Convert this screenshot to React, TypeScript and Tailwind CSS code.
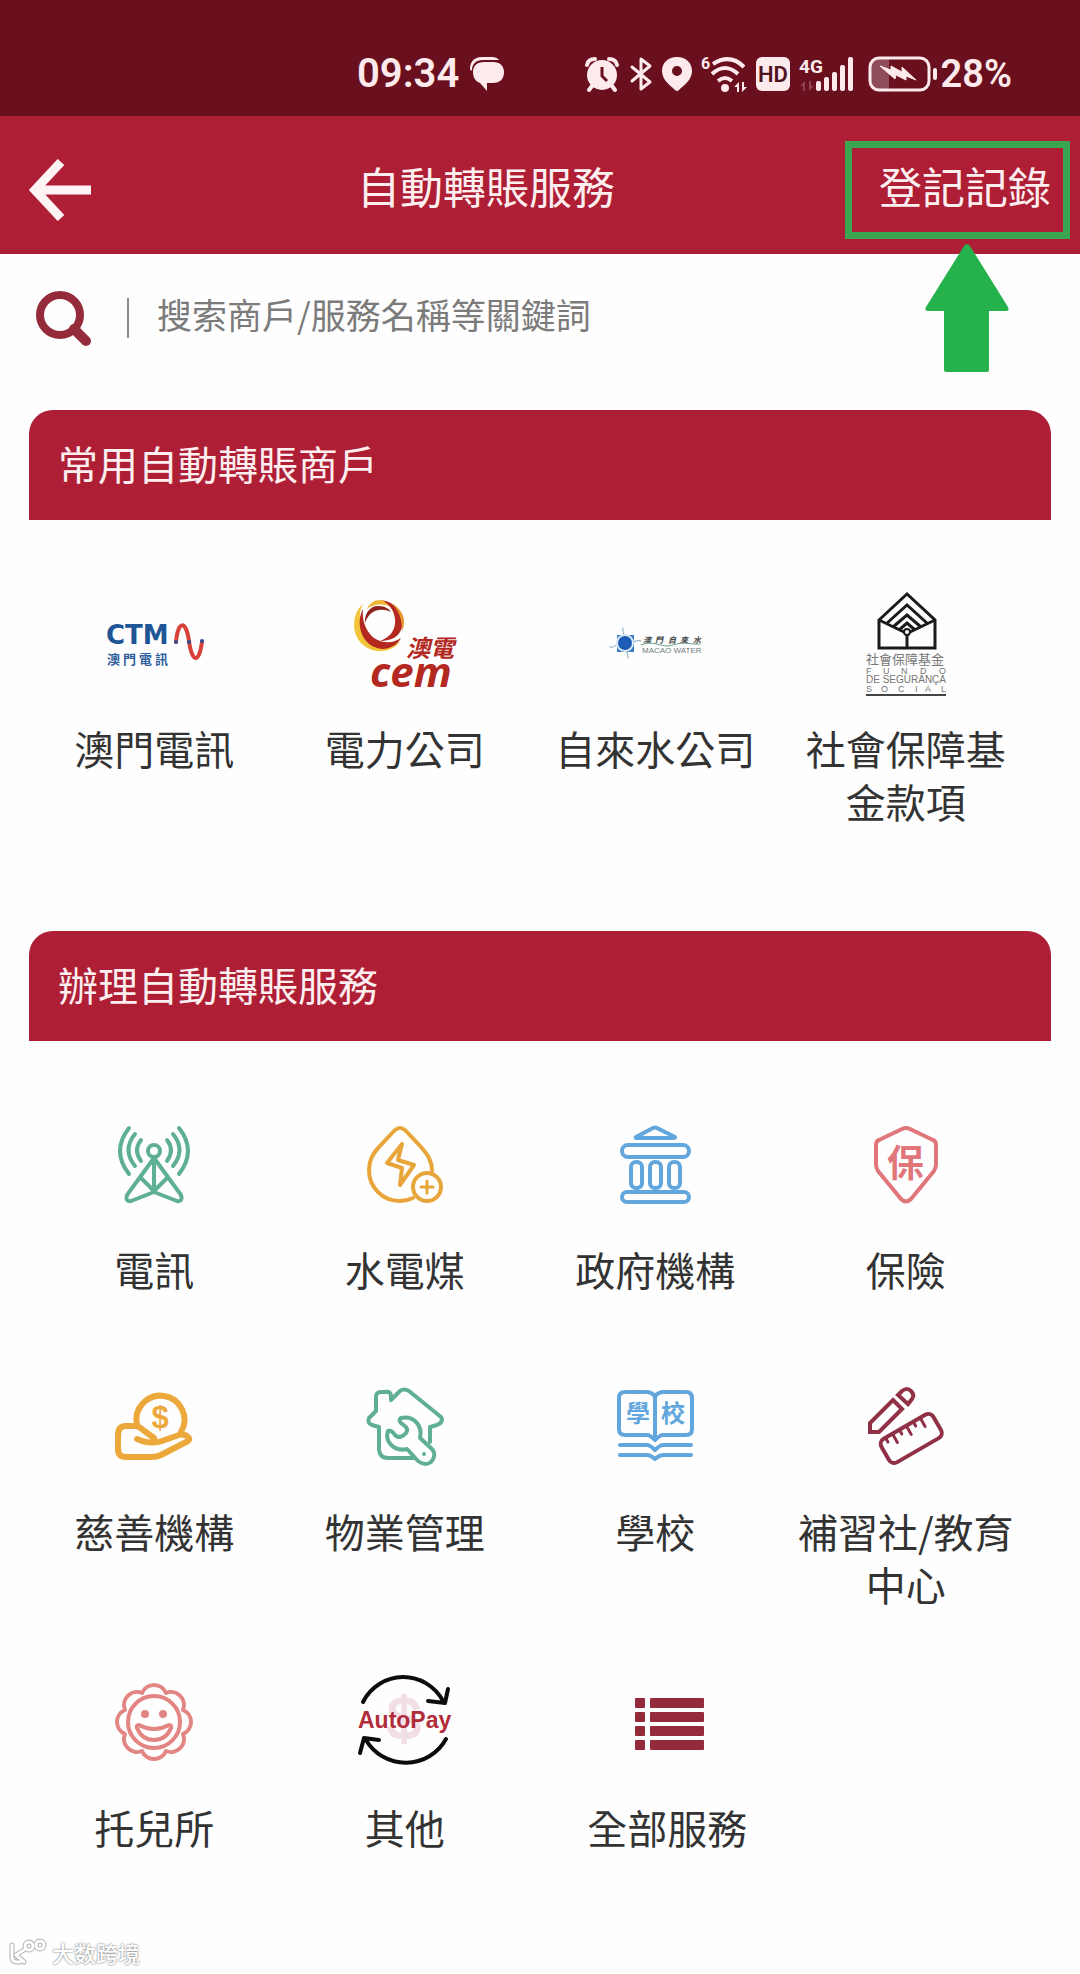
import type { ReactNode } from "react";

const GREEN = "#5fb092";
const ORANGE = "#e8a53a";
const BLUE = "#62a6de";
const CORAL = "#e0767a";
const WINE = "#932b3a";
const CJK = '"Noto Sans CJK TC", sans-serif';

function Art({ children, color = "none", width = 4 }: { children: ReactNode; color?: string; width?: number }) {
  return (
    <svg
      viewBox="0 0 96 96"
      className="h-24 w-24 shrink-0 overflow-visible"
      fill="none"
      stroke={color}
      strokeWidth={width}
      strokeLinecap="round"
      strokeLinejoin="round"
      aria-hidden="true"
    >
      {children}
    </svg>
  );
}

const ctm = (
  <Art>
    <text x="0" y="49" fontSize="26" fontWeight="700" fontFamily='"DejaVu Sans", sans-serif' fill="#1d5596">CTM</text>
    <text x="1 17 33 49" y="69" fontSize="13" fontWeight="700" fontFamily={CJK} fill="#2d609c">澳門電訊</text>
    <path d="M70 47 C72 25 80 25 83 46 C86 68 93 69 96 47" stroke="#d8413a" strokeWidth="4" />
    <g fill="#2a4f8f">
      <circle cx="70" cy="47" r="2" />
      <circle cx="83" cy="47" r="2" />
      <circle cx="96" cy="46" r="2" />
    </g>
  </Art>
);

const cem = (
  <Art>
    <path d="M6 9 C-8 20 -7 52 20 56 C30 57 38 53 43 47 C30 54 10 50 5 33 C2 24 2 16 6 9Z" fill="#f3c53a" />
    <path d="M10 14 C15 3 28 2 34 12 C26 8 16 9 10 14Z" fill="#f0b83a" />
    <path d="M6 14 C-1 26 3 48 20 53 C30 56 40 51 44 43 C34 50 20 48 13 39 C7 32 5 22 6 14Z" fill="#b3291f" />
    <path d="M25 5 C40 8 48 20 45 32 C43 41 35 46 23 46 C34 42 39 34 38 24 C37 15 32 9 25 5Z" fill="#b3291f" />
    <path d="M34 8 C46 14 50 26 45 36 C45 24 42 15 34 8Z" fill="#e9962f" />
    <path d="M8 28 C7 18 14 10 22 11 C28 11 32 14 34 17 C24 12 12 15 8 28Z" fill="#8e2320" />
    <text x="49" y="62" fontSize="24" fontWeight="700" fontStyle="italic" fontFamily={CJK} fill="#b3291f">澳電</text>
    <text x="13" y="92" fontSize="42" fontWeight="700" fontStyle="italic" fontFamily='"Open Sans", sans-serif' fill="#b3291f">cem</text>
  </Art>
);

const water = (
  <Art>
    <path d="M16 33 C15 37 17 39 18 42 M3 52 C7 53 9 50 12 48 M21 63 C21 59 20 57 18 54 M34 46 C30 45 28 46 25 48" stroke="#7da3bb" strokeWidth="1" />
    <rect x="10" y="40" width="17" height="17" fill="#3d7fc8" />
    <circle cx="18" cy="48" r="9" fill="#dcebf7" />
    <circle cx="18" cy="48" r="7" fill="#1d5cb4" />
    <text x="36 48 61 73 86" y="48" fontSize="8" fontWeight="700" fontStyle="italic" fontFamily={CJK} fill="#444">澳門自來水</text>
    <path d="M34 50 C48 44 54 54 66 50 S84 50 93 49" stroke="#6aa28f" strokeWidth="1" />
    <text x="35" y="58" fontSize="8" fontFamily='"Liberation Sans", sans-serif' fill="#6f7f7d">MACAO WATER</text>
  </Art>
);

const fss = (
  <Art>
    <g stroke="#1b1b1b" strokeWidth="3" strokeLinecap="butt" strokeLinejoin="miter">
      <path d="M21 25 L49 -1 L77 25 V53 H21Z" />
      <path d="M21 25 L46 37 M77 25 L52 37 M49 40 V53" />
      <path d="M28 29 L49 10 L70 29 M35 32 L49 20 L63 32 M41 35 L49 28 L57 35" />
      <circle cx="49" cy="37" r="3" strokeWidth="2" />
    </g>
    <g fill="#777" fontFamily='"Liberation Sans", sans-serif'>
      <text x="8" y="69" fontSize="13" fontFamily={CJK}>社會保障基金</text>
      <text x="8 25 43 62 81" y="79" fontSize="9">FUNDO</text>
      <text x="8" y="88" fontSize="10">DE SEGURANÇA</text>
      <text x="8 23 40 57 67 83" y="97" fontSize="9">SOCIAL</text>
    </g>
    <path d="M8 100 H88" stroke="#444" strokeWidth="2" strokeLinecap="butt" />
  </Art>
);

const tower = (
  <Art color={GREEN}>
    <circle cx="48" cy="35" r="6" />
    <path d="M48 42 L21 79 Q19 86 25 85 L48 76 L71 85 Q77 86 75 79 Z M48 42 V76 M35 62 L48 75 L61 62" />
    <path d="M23 12 Q5 35 23 58 M29 18 Q16 34 29 50 M35 24 Q27 34 35 45" />
    <path d="M73 12 Q91 35 73 58 M67 18 Q80 34 67 50 M61 24 Q69 34 61 45" />
  </Art>
);

const drop = (
  <Art color={ORANGE}>
    <path d="M56 82 C52 84 48 85 43 85 C25 85 12 71 12 54 C12 44 16 37 22 31 L37 15 Q43 9 49 15 L64 31 C71 39 75 45 75 55" />
    <circle cx="70" cy="71" r="14" />
    <path d="M64 71 H76 M70 65 V77" strokeWidth="3" />
    <path d="M45 28 L30 47 L45 52 L43 69 L57 49 L41 44Z" />
  </Art>
);

const government = (
  <Art color={BLUE}>
    <path d="M46 12 Q48 11 50 12 L68 21 Q68 22 66 22 H30 Q28 22 29 21Z" />
    <rect x="15" y="29" width="67" height="12" rx="6" />
    <rect x="24" y="46" width="11" height="26" rx="5" />
    <rect x="43" y="46" width="11" height="26" rx="5" />
    <rect x="62" y="46" width="11" height="26" rx="5" />
    <rect x="15" y="76" width="67" height="10" rx="5" />
  </Art>
);

const insurance = (
  <Art color={CORAL}>
    <path d="M44 13 Q48 11 52 13 L75 24 Q78 25 78 29 V48 Q78 52 76 55 L53 83 Q48 88 43 83 L20 55 Q18 52 18 48 V29 Q18 25 21 24Z" />
    <text x="29" y="61" fontSize="37" fontWeight="700" fontFamily={CJK} fill={CORAL} stroke="none">保</text>
  </Art>
);

const charity = (
  <Art color="#eca83a" width={6}>
    <path d="M31 47 A24 24 0 1 1 75 54" />
    <path d="M31 61 Q45 67 56 63 L73 57 Q79 55 83 60 Q84 61 82 63 L55 77 Q51 79 45 79 H20 Q12 79 12 71 V57 Q12 48 20 48 H29 Q33 48 37 52 L48 60" />
    <text x="54" y="50" textAnchor="middle" fontSize="31" fontWeight="700" fontFamily='"Liberation Sans", sans-serif' fill="#eca83a" stroke="none">$</text>
  </Art>
);

const property = (
  <Art color={GREEN}>
    <path d="M73 64 V49 L80 47 Q87 44 84 39 L52 13 Q47 10 43 13 L34 22 V17 Q33 13 28 14 H24 Q19 14 19 19 V33 L12 40 Q10 45 15 47 L22 49 V72 Q23 80 31 80 H57" />
    <path d="M44 40 C56 37 66 47 63 60 L75 71 C79 76 77 81 74 84 C70 87 65 86 61 83 L50 71 C38 74 27 64 31 53 C34 52 36 54 38 57 Q42 61 47 57 Q52 53 49 49 L44 45 Q41 42 44 40Z" />
    <circle cx="67" cy="76" r="2" fill={GREEN} stroke="none" />
  </Art>
);

const school = (
  <Art color={BLUE}>
    <path d="M48 18 Q44 14 40 14 H18 Q12 14 12 20 V51 Q12 57 18 57 H40 Q43 57 48 62 Q53 57 56 57 H79 Q85 57 85 51 V20 Q85 14 79 14 H56 Q52 14 48 18 V61" />
    <path d="M13 67 H40 Q43 67 48 72 Q53 67 56 67 H84 M13 77 H40 Q43 77 48 81 Q53 77 56 77 H84" />
    <g fill={BLUE} stroke="none" fontSize="24" fontWeight="700" fontFamily={CJK}>
      <text x="19" y="44">學</text>
      <text x="54" y="44">校</text>
    </g>
  </Art>
);

const education = (
  <Art color="#903146">
    <g strokeLinejoin="miter">
      <path d="M40 17 L44 13 Q49 9 53 13 Q57 17 54 21 L50 26 Z" />
      <path d="M35 22 L44 31 L21 54 H12 V45Z" />
    </g>
    <g transform="rotate(-30 53 60)">
      <rect x="23" y="47" width="60" height="27" rx="6" />
      <path d="M31 48 V52 M39 48 V57 M47 48 V52 M55 48 V57 M63 48 V52 M71 48 V57" strokeWidth="3" />
    </g>
  </Art>
);

const nursery = (
  <Art color="#e38583">
    <path d="M77 60 A13 13 0 0 1 60 77 A13 13 0 0 1 36 77 A13 13 0 0 1 19 60 A13 13 0 0 1 19 36 A13 13 0 0 1 36 19 A13 13 0 0 1 60 19 A13 13 0 0 1 77 36 A13 13 0 0 1 77 60Z" />
    <circle cx="48" cy="48" r="26" />
    <path d="M33 51 Q48 59 63 51 Q66 51 65 54 Q60 66 48 66 Q36 66 31 54 Q30 51 33 51Z" />
    <g fill="#e38583" stroke="none">
      <circle cx="39" cy="40" r="4" />
      <circle cx="57" cy="40" r="4" />
    </g>
  </Art>
);

const autopay = (
  <Art>
    <text x="47" y="65" textAnchor="middle" fontSize="60" fontFamily='"Liberation Sans", sans-serif' fill="#f2dfe4" stroke="#f2dfe4" strokeWidth="2">$</text>
    <g stroke="#0c0c0c" strokeWidth="4">
      <path d="M6 28 A45 45 0 0 1 86 27 M71 27 L88 29 L91 15" />
      <path d="M89 65 A46 46 0 0 1 9 66 M22 66 L7 64 L3 79" />
    </g>
    <text x="1" y="54" fontSize="23" fontWeight="700" fontFamily='"Liberation Sans", sans-serif' fill="#b12c3b">AutoPay</text>
  </Art>
);

const allServices = (
  <Art>
    <g fill={WINE}>
      {[24, 38, 52, 66].map((y) => (
        <g key={y}>
          <rect x="16" y={y} width="10" height="10" rx="1" />
          <rect x="31" y={y} width="54" height="10" rx="1" />
        </g>
      ))}
    </g>
  </Art>
);

type Item = { label: string; icon: ReactNode; wide?: boolean };

const merchants: Item[] = [
  { label: "澳門電訊", icon: ctm },
  { label: "電力公司", icon: cem },
  { label: "自來水公司", icon: water },
  { label: "社會保障基金款項", icon: fss },
];

const services: Item[] = [
  { label: "電訊", icon: tower },
  { label: "水電煤", icon: drop },
  { label: "政府機構", icon: government },
  { label: "保險", icon: insurance },
  { label: "慈善機構", icon: charity },
  { label: "物業管理", icon: property },
  { label: "學校", icon: school },
  { label: "補習社/教育中心", icon: education },
  { label: "托兒所", icon: nursery },
  { label: "其他", icon: autopay },
  { label: "全部服務", icon: allServices, wide: true },
];

function Section({ title, items }: { title: string; items: Item[] }) {
  return (
    <section className="px-[29px]">
      <h2 className="flex h-[110px] items-center rounded-t-3xl bg-[#ae1e35] px-[29px] pb-1 text-[40px] text-[#fdeef0]">{title}</h2>
      <div className="mr-5 grid grid-cols-4 gap-y-[63px] pt-[75px]">
        {items.map((item) => (
          <button
            key={item.label}
            type="button"
            className={item.wide ? "flex flex-col items-center gap-[31px] pl-6" : "flex flex-col items-center gap-[31px]"}
          >
            {item.icon}
            <span className="min-h-[72px] w-full px-4 text-[40px] leading-[53px] text-[#333]">{item.label}</span>
          </button>
        ))}
      </div>
    </section>
  );
}

function StatusBar() {
  const fg = "#fdeaec";
  return (
    <div className="flex h-[116px] items-center justify-between bg-[#6a0f1d] pr-[68px] pl-[357px] font-['Roboto',sans-serif] font-semibold text-[#fdeaec]">
      <div className="flex items-center gap-[10px] pt-8">
        <span className="text-[40px] leading-[44px]">09:34</span>
        <svg viewBox="0 0 36 36" className="size-9" fill={fg} aria-hidden="true">
          <path d="M1 13 C1 5 6 1 13 1 H23 Q28 1 30 4 H14 C7 4 3 8 3 14 Q2 16 1 13Z" />
          <path d="M15 6 H24 C31 6 35 10 35 16 C35 23 31 27 24 27 H18 V35 L11 27 C6 25 4 21 4 16 C4 10 8 6 15 6Z" />
        </svg>
      </div>
      <div className="flex items-center gap-[9px] pt-8">
        <svg viewBox="0 0 36 36" className="size-9" fill={fg} aria-hidden="true">
          <circle cx="18" cy="19" r="15" />
          <path d="M3 9 Q4 3 11 3 M25 3 Q32 3 33 9 M8 30 L5 34 M28 30 L31 34" stroke={fg} strokeWidth="4" strokeLinecap="round" fill="none" />
          <path d="M18 11 V20 L23 25" stroke="#6a0f1d" strokeWidth="3" fill="none" />
        </svg>
        <svg viewBox="0 0 24 36" className="h-9 w-6" fill="none" stroke={fg} strokeWidth="3" strokeLinejoin="round" strokeLinecap="round" aria-hidden="true">
          <path d="M3 11 L21 26 L12 33 V3 L21 10 L3 25" />
        </svg>
        <svg viewBox="0 0 30 36" className="h-9 w-[30px]" fill={fg} fillRule="evenodd" aria-hidden="true">
          <path d="M15 1 C24 1 30 7 30 15 C30 24 22 29 17 34 Q15 36 13 34 C8 29 0 24 0 15 C0 7 6 1 15 1Z M15 10 A5 5 0 1 0 15 20 A5 5 0 1 0 15 10Z" />
        </svg>
        <svg viewBox="0 0 46 38" className="h-[38px] w-[46px]" fill="none" stroke={fg} strokeWidth="4" aria-hidden="true">
          <text x="0" y="14" fontSize="16" fontWeight="700" fill={fg} stroke="none">6</text>
          <path d="M12 9 Q29 -2 43 12 M11 19 Q24 7 37 19 M17 26 Q24 20 31 26" />
          <circle cx="24" cy="33" r="4" fill={fg} stroke="none" />
          <path d="M33 32 L38 27 V37 H36 V32Z M46 32 L41 37 V27 H43 V32Z" fill={fg} stroke="none" />
        </svg>
        <svg viewBox="0 0 34 36" className="h-9 w-[34px]" aria-hidden="true">
          <rect y="1" width="34" height="34" rx="6" fill={fg} />
          <text x="17" y="26" textAnchor="middle" fontSize="22" fontWeight="600" fill="#4f1420">HD</text>
        </svg>
        <svg viewBox="0 0 56 36" className="h-9 w-14" fill={fg} aria-hidden="true">
          <text x="0" y="17" fontSize="19" fontWeight="700">4G</text>
          <path d="M1 30 L6 25 V35 H4 V30Z M15 30 L10 35 V25 H12 V30Z" fill="#8f4351" />
          <rect x="17" y="25" width="5" height="10" rx="2" />
          <rect x="25" y="21" width="5" height="14" rx="2" />
          <rect x="33" y="16" width="5" height="19" rx="2" />
          <rect x="41" y="9" width="5" height="26" rx="2" />
          <rect x="49" y="1" width="5" height="34" rx="2" />
        </svg>
        <div className="flex items-center gap-[3px] pl-1">
          <svg viewBox="0 0 70 36" className="h-9 w-[70px]" fill={fg} aria-hidden="true">
            <path d="M11 3 H21 V33 H11 Q3 33 3 25 V11 Q3 3 11 3Z" fill="#8f4d5b" />
            <rect x="2" y="2" width="59" height="32" rx="9" fill="none" stroke={fg} strokeWidth="3" />
            <rect x="65" y="12" width="4" height="12" rx="2" />
            <path d="M12 10 L23 14 L23 10 L34 16 L34 11 L48 24 L38 20 L38 24 L28 19 L27 23Z" stroke={fg} strokeLinejoin="round" />
          </svg>
          <span className="text-[38px] leading-[44px]">28%</span>
        </div>
      </div>
    </div>
  );
}

export default function App() {
  return (
    <main className="flex min-h-screen w-full flex-col bg-[#fefefe] font-['Noto_Sans_CJK_TC',sans-serif]">
      <StatusBar />
      <header className="flex h-[138px] items-center bg-[#ae1e35] pt-[10px] pr-[10px] text-[43px] text-[#fdeef0]">
        <button type="button" aria-label="返回" className="flex w-[127px] items-center pl-[29px]">
          <svg viewBox="0 0 62 62" className="size-[62px]" fill="none" stroke="#fff4f5" strokeWidth="9" aria-hidden="true">
            <path d="M32 3 L6 31 L32 59 M5 31 H62" />
          </svg>
        </button>
        <h1 className="flex-1 pb-[10px] text-center">自動轉賬服務</h1>
        <div className="relative">
          <button type="button" className="h-[98px] border-[7px] border-[#3aa652] pr-[12px] pb-[10px] pl-[27px] leading-[60px]">
            登記記錄
          </button>
          <svg viewBox="0 0 84 130" className="absolute top-[103px] left-[80px] w-[84px]" fill="#25b14c" aria-hidden="true">
            <path d="M39 2 Q42 -2 45 2 L83 63 Q85 67 81 67 H64 V126 Q64 128 62 128 H22 Q19 128 19 126 V67 H3 Q-1 67 1 63Z" />
          </svg>
        </div>
      </header>
      <label className="flex h-[156px] items-center pb-7 pl-[35px]">
        <svg viewBox="0 0 56 56" className="size-14 shrink-0" fill="none" stroke={WINE} aria-label="搜索">
          <circle cx="25" cy="25" r="20" strokeWidth="8" />
          <path d="M39 39 L51 51" strokeWidth="10" strokeLinecap="round" />
        </svg>
        <span className="ml-9 h-10 w-[2px] bg-[#8a8a8a]" />
        <input
          type="search"
          placeholder="搜索商戶/服務名稱等關鍵詞"
          className="ml-7 w-[520px] bg-transparent pb-2 text-[35px] text-[#333] outline-none placeholder:text-[#7b7b7b]"
        />
      </label>
      <Section title="常用自動轉賬商戶" items={merchants} />
      <div className="h-[103px]" />
      <Section title="辦理自動轉賬服務" items={services} />
      <footer className="mt-auto flex items-center gap-1 px-2 pb-2 text-white">
        <svg viewBox="0 0 40 28" className="h-7 w-10" fill="none" strokeLinecap="round" strokeLinejoin="round" aria-hidden="true">
          <g stroke="#b0b0b0" strokeWidth="5">
            <path d="M4 7 V19 Q4 24 9 24 H12 M16 12 L8 17 L16 24" />
            <circle cx="21" cy="8" r="4" />
            <circle cx="32" cy="7" r="4" />
          </g>
          <g stroke="#fff" strokeWidth="3">
            <path d="M4 7 V19 Q4 24 9 24 H12 M16 12 L8 17 L16 24" />
            <circle cx="21" cy="8" r="4" />
            <circle cx="32" cy="7" r="4" />
          </g>
        </svg>
        <span className="text-[22px] leading-7 font-medium [text-shadow:0_0_2px_#555]">大数跨境</span>
      </footer>
    </main>
  );
}
